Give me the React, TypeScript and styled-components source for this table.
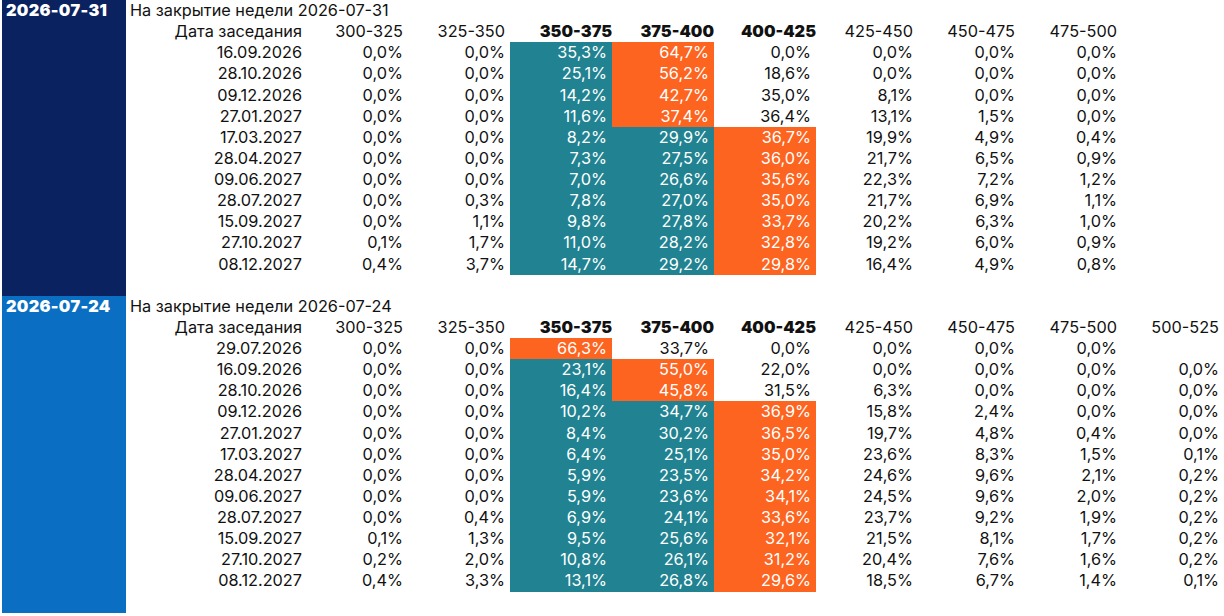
import styled, { createGlobalStyle } from "styled-components";

const GlobalStyle = createGlobalStyle`
  body {
    margin: 0;
    background: #ffffff;
    font-family: Inter, "Noto Sans", "Liberation Sans", sans-serif;
    color: #111111;
  }
`;

const ROW_H = 21.14;

const Page = styled.div`
  width: 1224px;
  padding-left: 2px;
  box-sizing: border-box;
`;

const Block = styled.div`
  display: grid;
  grid-template-columns: 124px 180px repeat(9, 102px);
  grid-auto-rows: ${ROW_H}px;
  font-size: 16.3px;
  line-height: ${ROW_H}px;
  white-space: nowrap;
`;

const Label = styled.div<{ $bg: string; $rows: number }>`
  grid-column: 1;
  grid-row: 1 / span ${({ $rows }) => $rows};
  background: ${({ $bg }) => $bg};
  color: #ffffff;
  font-weight: 900;
  font-size: 16.3px;
  letter-spacing: 0.3px;
  padding-left: 4px;
`;

const Title = styled.div`
  grid-column: 2 / span 4;
  padding-left: 4px;
`;

const Cell = styled.div<{ $fill?: string; $bold?: boolean }>`
  text-align: right;
  padding-right: ${({ $bold }) => ($bold ? "0" : "5px")};
  background: ${({ $fill }) => $fill ?? "transparent"};
  color: ${({ $fill }) => ($fill ? "#ffffff" : "#111111")};
  font-weight: ${({ $bold }) => ($bold ? 900 : 400)};
`;

const DateCell = styled(Cell)`
  grid-column: 2;
  padding-right: 4px;
`;

const Spacer = styled.div`
  grid-column: 2 / -1;
`;

const TEAL = "#218391";
const ORANGE = "#fc6420";

type Week = {
  label: string;
  color: string;
  headers: string[];
  rows: [string, string[]][];
  trailing: number;
};

const weeks: Week[] = [
  {
    label: "2026-07-31",
    color: "#0b2260",
    headers: ["300-325", "325-350", "350-375", "375-400", "400-425", "425-450", "450-475", "475-500"],
    trailing: 1,
    rows: [
      ["16.09.2026", ["0,0", "0,0", "35,3", "64,7", "0,0", "0,0", "0,0", "0,0"]],
      ["28.10.2026", ["0,0", "0,0", "25,1", "56,2", "18,6", "0,0", "0,0", "0,0"]],
      ["09.12.2026", ["0,0", "0,0", "14,2", "42,7", "35,0", "8,1", "0,0", "0,0"]],
      ["27.01.2027", ["0,0", "0,0", "11,6", "37,4", "36,4", "13,1", "1,5", "0,0"]],
      ["17.03.2027", ["0,0", "0,0", "8,2", "29,9", "36,7", "19,9", "4,9", "0,4"]],
      ["28.04.2027", ["0,0", "0,0", "7,3", "27,5", "36,0", "21,7", "6,5", "0,9"]],
      ["09.06.2027", ["0,0", "0,0", "7,0", "26,6", "35,6", "22,3", "7,2", "1,2"]],
      ["28.07.2027", ["0,0", "0,3", "7,8", "27,0", "35,0", "21,7", "6,9", "1,1"]],
      ["15.09.2027", ["0,0", "1,1", "9,8", "27,8", "33,7", "20,2", "6,3", "1,0"]],
      ["27.10.2027", ["0,1", "1,7", "11,0", "28,2", "32,8", "19,2", "6,0", "0,9"]],
      ["08.12.2027", ["0,4", "3,7", "14,7", "29,2", "29,8", "16,4", "4,9", "0,8"]],
    ],
  },
  {
    label: "2026-07-24",
    color: "#0a6fc2",
    headers: ["300-325", "325-350", "350-375", "375-400", "400-425", "425-450", "450-475", "475-500", "500-525"],
    trailing: 1,
    rows: [
      ["29.07.2026", ["0,0", "0,0", "66,3", "33,7", "0,0", "0,0", "0,0", "0,0", ""]],
      ["16.09.2026", ["0,0", "0,0", "23,1", "55,0", "22,0", "0,0", "0,0", "0,0", "0,0"]],
      ["28.10.2026", ["0,0", "0,0", "16,4", "45,8", "31,5", "6,3", "0,0", "0,0", "0,0"]],
      ["09.12.2026", ["0,0", "0,0", "10,2", "34,7", "36,9", "15,8", "2,4", "0,0", "0,0"]],
      ["27.01.2027", ["0,0", "0,0", "8,4", "30,2", "36,5", "19,7", "4,8", "0,4", "0,0"]],
      ["17.03.2027", ["0,0", "0,0", "6,4", "25,1", "35,0", "23,6", "8,3", "1,5", "0,1"]],
      ["28.04.2027", ["0,0", "0,0", "5,9", "23,5", "34,2", "24,6", "9,6", "2,1", "0,2"]],
      ["09.06.2027", ["0,0", "0,0", "5,9", "23,6", "34,1", "24,5", "9,6", "2,0", "0,2"]],
      ["28.07.2027", ["0,0", "0,4", "6,9", "24,1", "33,6", "23,7", "9,2", "1,9", "0,2"]],
      ["15.09.2027", ["0,1", "1,3", "9,5", "25,6", "32,1", "21,5", "8,1", "1,7", "0,2"]],
      ["27.10.2027", ["0,2", "2,0", "10,8", "26,1", "31,2", "20,4", "7,6", "1,6", "0,2"]],
      ["08.12.2027", ["0,4", "3,3", "13,1", "26,8", "29,6", "18,5", "6,7", "1,4", "0,1"]],
    ],
  },
];

const BOLD_COLS = [2, 3, 4];

// orange marks the most likely range, teal the ranges from 350 up to it
const fillFor = (values: string[], i: number) => {
  const nums = values.map((v) => (v ? parseFloat(v.replace(",", ".")) : -1));
  const top = nums.indexOf(Math.max(...nums));
  if (i === top) return ORANGE;
  if (i >= 2 && i < top) return TEAL;
  return undefined;
};

const WeekTable = ({ week }: { week: Week }) => {
  const totalRows = 2 + week.rows.length + week.trailing;
  return (
    <Block>
      <Label $bg={week.color} $rows={totalRows}>
        {week.label}
      </Label>
      <Title>На закрытие недели {week.label}</Title>
      <DateCell>Дата заседания</DateCell>
      {week.headers.map((h, i) => (
        <Cell key={h} $bold={BOLD_COLS.includes(i)}>
          {h}
        </Cell>
      ))}
      {week.headers.length < 9 && <div />}
      {week.rows.map(([date, values]) => [
        <DateCell key={date}>{date}</DateCell>,
        ...values.map((v, i) => (
          <Cell key={date + i} $fill={fillFor(values, i)}>
            {v ? `${v}%` : ""}
          </Cell>
        )),
        ...(values.length < 9 ? [<div key={date + "x"} />] : []),
      ])}
      {Array.from({ length: week.trailing }).map((_, i) => (
        <Spacer key={"s" + i} />
      ))}
    </Block>
  );
};

export default function App() {
  return (
    <Page>
      <GlobalStyle />
      {weeks.map((w) => (
        <WeekTable key={w.label} week={w} />
      ))}
    </Page>
  );
}
